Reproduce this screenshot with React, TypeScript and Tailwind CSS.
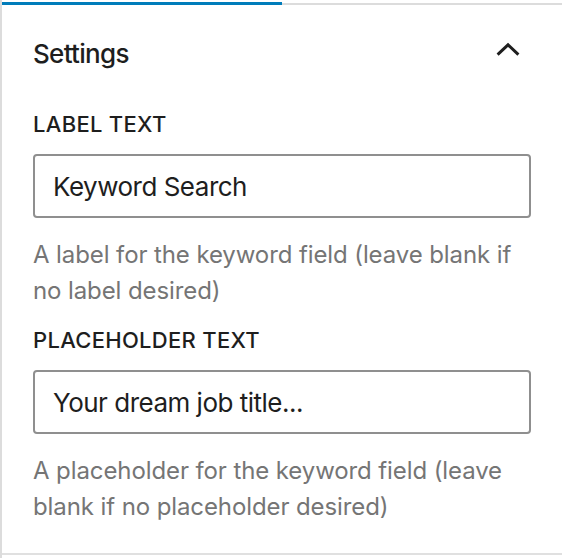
// Block settings panel: tab bar + "Settings" collapsible with two text fields.
import React from "react";

const font = { fontFamily: "Inter, 'Liberation Sans', sans-serif" };

function Field({ label, value, help }: { label: string; value: string; help: string }) {
  return (
    <div className="flex flex-col">
      <label className="text-[22px] font-medium uppercase leading-[30px] tracking-[0.3px] text-[#1e1e1e]">
        {label}
      </label>
      <input
        readOnly
        value={value}
        className="mt-[15px] h-[64px] w-full rounded-[4px] border-2 border-[#8f8f8f] px-[18px] text-[26px] tracking-[-0.5px] text-[#1e1e1e] outline-none"
      />
      <p className="mt-[19px] text-[24px] leading-[36px] tracking-[-0.1px] text-[#757575]">{help}</p>
    </div>
  );
}

export default function App() {
  return (
    <div style={font} className="flex h-[558px] w-[562px] flex-col border-l-2 border-[#dcdcdc] bg-white">
      <div className="mt-[2px] flex h-[3px] border-b-2 border-[#dcdcdc]">
        <div className="h-[3px] w-[280px] bg-[#007cba]" />
      </div>
      <div className="flex h-[550px] flex-col border-b-2 border-[#e0e0e0] px-[31px]">
        <div className="flex h-[96px] items-center justify-between">
          <h2 className="text-[26px] font-medium tracking-[-0.7px] text-[#1e1e1e]">Settings</h2>
          <svg width="48" height="48" viewBox="0 0 24 24" className="-mr-[1px]">
            <path d="M6.8 12.8 12 7.9 17.2 12.8" fill="none" stroke="#1e1e1e" strokeWidth="1.5" />
          </svg>
        </div>
        <div className="flex flex-col gap-[16px] pt-[8px]">
          <Field
            label="Label Text"
            value="Keyword Search"
            help="A label for the keyword field (leave blank if no label desired)"
          />
          <Field
            label="Placeholder Text"
            value="Your dream job title..."
            help="A placeholder for the keyword field (leave blank if no placeholder desired)"
          />
        </div>
      </div>
    </div>
  );
}
